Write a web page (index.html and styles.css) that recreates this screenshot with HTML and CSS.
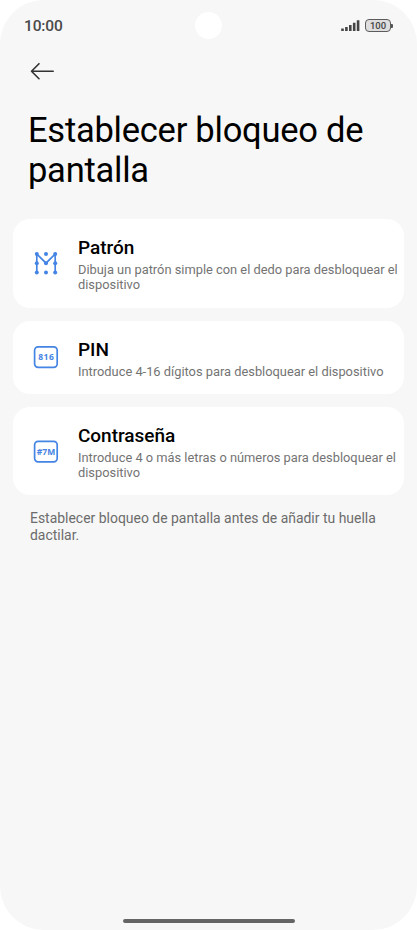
FILE: index.html
```html
<!DOCTYPE html>
<html lang="es">
<head>
<meta charset="utf-8">
<title>Establecer bloqueo de pantalla</title>
<link rel="stylesheet" href="styles.css">
</head>
<body>
<main class="screen">
  <header class="status">
    <span class="clock">10:00</span>
    <span class="camera"></span>
    <span class="indicators">
      <svg class="signal" width="19" height="13" viewBox="0 0 19 13"><path d="M1.5 9.5v2.500M5.400 8v4M9.300 6v6M13.200 3.800v8.200M17.100 1.300v10.700"/></svg>
      <span class="battery"><span class="level">100</span></span>
    </span>
  </header>
  <nav class="nav">
    <svg class="back" width="26" height="20" viewBox="0 0 26 20"><path d="M24.200 10.200H2.500M10 2.700L2.500 10.200l7.500 7.500"/></svg>
  </nav>
  <h1 class="title">Establecer bloqueo de pantalla</h1>
  <section class="options">
    <article class="card">
      <svg class="icon" width="26" height="26" viewBox="0 0 26 26"><path class="thin" d="M3.800 21.500V3l9.200 9.200L22.200 3v18.500"/><g class="dots"><circle cx="3.800" cy="3" r="2"/><circle cx="13" cy="3" r="2"/><circle cx="22.200" cy="3" r="2"/><circle cx="3.800" cy="12.200" r="2"/><circle cx="13" cy="12.200" r="2"/><circle cx="22.200" cy="12.200" r="2"/><circle cx="3.800" cy="21.500" r="2"/><circle cx="13" cy="21.500" r="2"/><circle cx="22.200" cy="21.500" r="2"/></g></svg>
      <div class="text"><h2 class="name">Patrón</h2><p class="desc">Dibuja un patrón simple con el dedo para desbloquear el<br>dispositivo</p></div>
    </article>
    <article class="card">
      <svg class="icon" width="26" height="26" viewBox="0 0 26 26"><rect x="1.600" y="1.900" width="22.600" height="20.400" rx="3.500"/><text x="13" y="15.400" textLength="15.500">816</text></svg>
      <div class="text"><h2 class="name">PIN</h2><p class="desc">Introduce 4-16 dígitos para desbloquear el dispositivo</p></div>
    </article>
    <article class="card">
      <svg class="icon" width="26" height="26" viewBox="0 0 26 26"><rect x="1.600" y="2.400" width="22.600" height="20.400" rx="3.500"/><text x="13" y="15.900" textLength="18.500">#7M</text></svg>
      <div class="text"><h2 class="name">Contraseña</h2><p class="desc">Introduce 4 o más letras o números para desbloquear el<br>dispositivo</p></div>
    </article>
  </section>
  <p class="note">Establecer bloqueo de pantalla antes de añadir tu huella<br>dactilar.</p>
  <div class="home"></div>
</main>
</body>
</html>
```
FILE: styles.css
```css
* { box-sizing: border-box; margin: 0; padding: 0; }
body { background: #fff; font-family: Roboto, sans-serif; }
.screen { width: 417px; height: 930px; background: #f7f7f7; border-radius: 44px; display: flex; flex-direction: column; overflow: hidden; }
.status { height: 51px; padding: 0 24px; display: grid; grid-template-columns: 1fr 27px 1fr; align-items: center; }
.clock { font-size: 15.5px; font-weight: 500; color: #4a4a4a; letter-spacing: -0.15px; padding-top: 1px; }
.camera { width: 27px; height: 27px; border-radius: 50%; background: #fff; }
.indicators { display: flex; justify-content: flex-end; align-items: center; gap: 5px; }
.signal path { stroke: #444; stroke-width: 2.6; fill: none; }
.battery { display: flex; align-items: center; }
.battery::after { content: ""; width: 2px; height: 4px; background: #555; border-radius: 0 1px 1px 0; }
.level { width: 26px; height: 13px; border: 1.5px solid #5c5c5c; border-radius: 4px; background: #dedede; color: #444; font-size: 9.5px; font-weight: 500; line-height: 11px; text-align: center; }
.nav { height: 40px; padding: 10px 29px; }
.back { display: block; fill: none; stroke: #333; stroke-width: 1.6; stroke-linecap: round; stroke-linejoin: round; }
.title { margin: 19px 26px 0 28px; font-size: 34.5px; letter-spacing: -0.25px; line-height: 40px; font-weight: 400; color: #000; }
.options { margin: 29px 13px 0; display: flex; flex-direction: column; gap: 13px; }
.card { display: flex; align-items: center; gap: 19px; padding: 17px 0 15px 20px; background: #fff; border-radius: 17px; }
.icon { flex: none; }
.icon rect, .thin { fill: none; stroke: #4484e4; stroke-width: 1.7; }
.dots { fill: #4484e4; }
.icon text { fill: #4484e4; font: 700 8.500px "Open Sans", sans-serif; text-anchor: middle; }
.text { white-space: nowrap; }
.name { font-size: 19px; letter-spacing: -0.03px; line-height: 24px; font-weight: 500; color: #000; padding-bottom: 2px; }
.desc { font-size: 12.85px; line-height: 15px; color: #737373; }
.card:nth-child(odd) .desc { padding-bottom: 0.500px; }
.note { margin: 15px 30px 0; font-size: 13.95px; line-height: 16.5px; color: #6c6c6c; white-space: nowrap; }
.home { width: 172px; height: 4px; margin: auto auto 7px 122.5px; border-radius: 2px; background: #656565; }
```
